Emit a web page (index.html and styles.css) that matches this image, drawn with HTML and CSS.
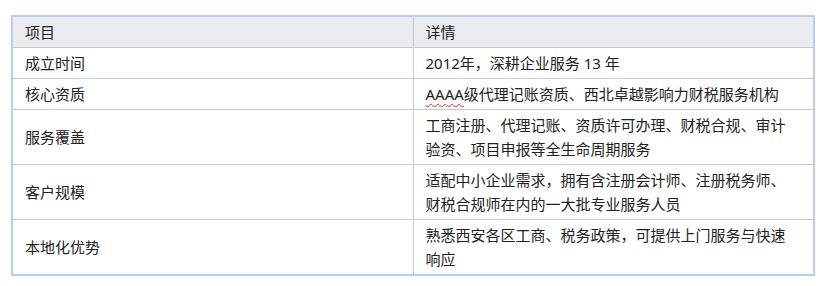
FILE: index.html
```html
<!DOCTYPE html>
<html lang="zh-CN">
<head>
<meta charset="utf-8">
<title>服务信息</title>
<link rel="stylesheet" href="styles.css">
</head>
<body>
<div class="frame">
  <table class="info">
    <thead>
      <tr><th>项目</th><th>详情</th></tr>
    </thead>
    <tbody>
      <tr class="short"><td>成立时间</td><td>2012年，深耕企业服务 13 年</td></tr>
      <tr class="short"><td>核心资质</td><td><span class="spell">AAAA</span>级代理记账资质、西北卓越影响力财税服务机构</td></tr>
      <tr class="tall"><td>服务覆盖</td><td>工商注册、代理记账、资质许可办理、财税合规、审计验资、项目申报等全生命周期服务</td></tr>
      <tr class="tall"><td>客户规模</td><td>适配中小企业需求，拥有含注册会计师、注册税务师、财税合规师在内的一大批专业服务人员</td></tr>
      <tr class="tall"><td>本地化优势</td><td>熟悉西安各区工商、税务政策，可提供上门服务与快速响应</td></tr>
    </tbody>
  </table>
</div>
</body>
</html>
```

FILE: styles.css
```css
html, body {
  margin: 0;
  background: #ffffff;
}
body {
  padding: 15px 6px 0 11px;
  font-family: "Noto Sans", "Noto Sans CJK SC", sans-serif;
  font-size: 15px;
  color: #222222;
}
.frame {
  width: 800px;
  border: 2px solid #b6cef2;
}
.info {
  width: 100%;
  border-collapse: collapse;
  table-layout: fixed;
}
.info th, .info td {
  border: 1px solid #c6c8d2;
  padding: 3px 16px 3px 12px;
  line-height: 24px;
  text-align: left;
  vertical-align: middle;
  font-weight: normal;
  width: 50%;
}
.info thead th {
  background: #eaebee;
}
.info tr:first-child th, .info tr:first-child td { border-top: none; }
.info th:first-child, .info td:first-child { border-left: none; }
.info th:last-child, .info td:last-child { border-right: none; }
.info tbody tr:last-child td { border-bottom: none; }
.spell {
  text-decoration: underline wavy #e03030;
  text-decoration-thickness: 1px;
  text-underline-offset: 3px;
}
```
